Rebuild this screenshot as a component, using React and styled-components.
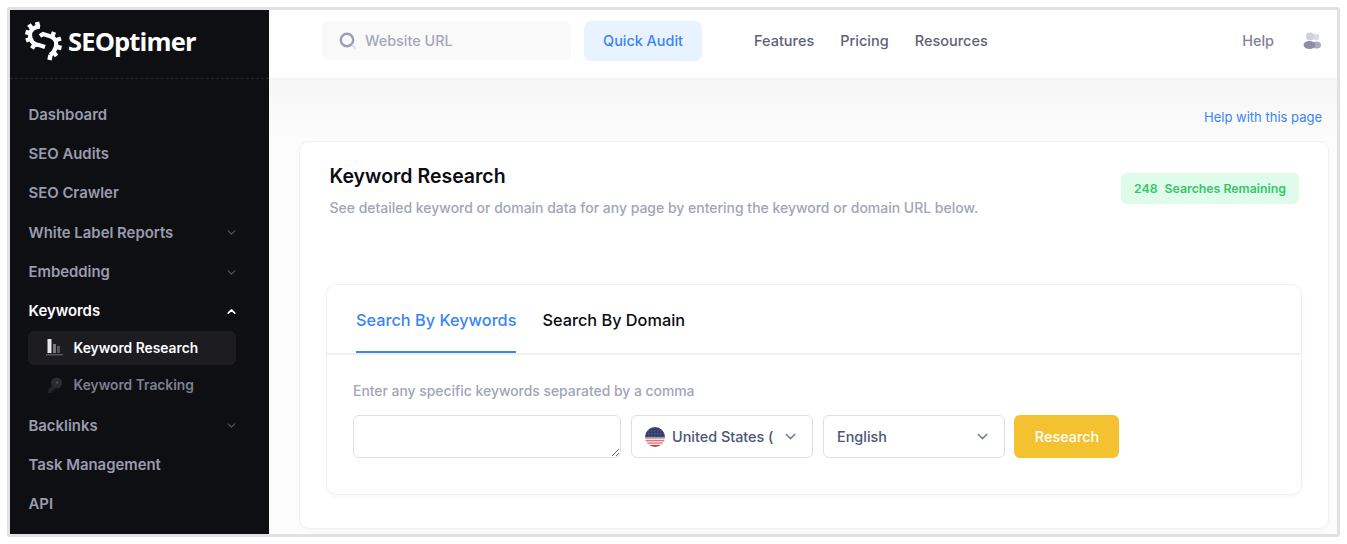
import React from 'react';
import styled, { createGlobalStyle } from 'styled-components';
import { ChevronDown, ChevronUp } from 'lucide-react';

const GlobalStyle = createGlobalStyle`
  html, body {
    margin: 0;
    background: #fff;
    font-family: Inter, "Liberation Sans", sans-serif;
  }
  * { box-sizing: border-box; }
`;

const Frame = styled.div`
  width: 1333px;
  height: 530px;
  margin: 7px 0 0 7px;
  border: 3px solid #e1e1e1;
  border-radius: 3px;
  display: flex;
  overflow: hidden;
`;

const Sidebar = styled.aside`
  width: 259px;
  flex: none;
  background: #0e0f13;
  display: flex;
  flex-direction: column;
`;

const LogoRow = styled.div`
  height: 69px;
  flex: none;
  padding: 0 0 7px 15px;
  display: flex;
  align-items: center;
  gap: 5px;
  border-bottom: 1px dashed #26272c;
`;

const LogoText = styled.span`
  color: #fff;
  font-family: "Open Sans", sans-serif;
  font-size: 25.5px;
  font-weight: 700;
  letter-spacing: -0.85px;
`;

const Nav = styled.nav`
  padding: 16.2px 33px 0 18.500px;
  display: flex;
  flex-direction: column;
`;

const NavItem = styled.div`
  height: 39.3px;
  flex: none;
  display: flex;
  align-items: center;
  justify-content: space-between;
  font-size: 14.9px;
  font-weight: 600;
  color: ${(p) => (p.$open ? '#fff' : '#9a9cae')};
  svg {
    color: ${(p) => (p.$open ? '#fff' : '#55565f')};
    margin-right: -2px;
  }
`;

const SubItem = styled.div`
  height: ${(p) => (p.$active ? '34px' : '41px')};
  flex: none;
  display: flex;
  align-items: center;
  gap: 11px;
  padding-left: 17.500px;
  margin-left: -0.5px;
  border-radius: 6px;
  font-size: 13.8px;
  font-weight: 600;
  color: ${(p) => (p.$active ? '#fff' : '#7d7f90')};
  background: ${(p) => (p.$active ? '#1c1c21' : 'transparent')};
`;

const Main = styled.div`
  flex: 1;
  min-width: 0;
  display: flex;
  flex-direction: column;
`;

const Header = styled.header`
  height: 68px;
  flex: none;
  background: #fff;
  padding: 11px 0 0 53px;
  display: flex;
  align-items: flex-start;
`;

const SearchBox = styled.div`
  width: 249px;
  height: 39px;
  background: #f9f9f9;
  border-radius: 7px;
  padding-left: 17px;
  display: flex;
  align-items: center;
  gap: 8px;
  font-size: 14.4px;
  font-weight: 500;
  color: #a5a8ba;
`;

const QuickAudit = styled.button`
  width: 118px;
  height: 40px;
  margin-left: 13px;
  padding: 0 0 2px;
  border: 0;
  border-radius: 7px;
  background: #e9f3ff;
  color: #3a85f5;
  font: 500 14.4px Inter, sans-serif;
`;

const TopLinks = styled.div`
  height: 39px;
  margin-left: 52px;
  display: flex;
  align-items: center;
  gap: 26px;
  font-size: 14.5px;
  font-weight: 500;
  color: #5e6278;
`;

const HeaderRight = styled.div`
  height: 39px;
  margin-left: auto;
  padding-right: 16px;
  display: flex;
  align-items: center;
  gap: 29px;
  font-size: 14.4px;
  font-weight: 500;
  color: #7e8299;
`;

const Content = styled.main`
  flex: 1;
  min-height: 0;
  background: linear-gradient(#f5f5f5, #fcfcfc 60px);
  padding: 31px 8px 0 30px;
`;

const HelpRow = styled.div`
  padding-right: 7px;
  text-align: right;
  font-size: 13px;
  line-height: 16px;
  color: #3a85f5;
`;

const Card = styled.section`
  height: 388px;
  margin-top: 16px;
  background: #fff;
  border: 1px solid #f1f1f4;
  border-radius: 10px;
  box-shadow: 0 2px 6px rgba(0, 0, 0, 0.02);
  padding: 21px 26px 0 26px;
`;

const CardHead = styled.div`
  display: flex;
  justify-content: space-between;
  align-items: flex-start;
  padding-left: 3.500px;
  height: 121px;
`;

const Title = styled.h1`
  margin: 0;
  font-size: 19.5px;
  line-height: 26px;
  font-weight: 600;
  color: #0b0b12;
`;

const Subtitle = styled.p`
  margin: 11px 0 0;
  font-size: 13.97px;
  line-height: 16px;
  font-weight: 500;
  color: #a1a5b7;
`;

const Badge = styled.div`
  width: 178px;
  height: 31px;
  margin: 10px 3px 0 0;
  border-radius: 6px;
  background: #dffbe9;
  color: #35c569;
  font-size: 12.3px;
  font-weight: 600;
  display: flex;
  align-items: center;
  justify-content: center;
  gap: 7px;
`;

const InnerCard = styled.div`
  height: 211px;
  background: #fff;
  border: 1px solid #f1f1f4;
  border-radius: 10px;
  box-shadow: 0 2px 6px rgba(0, 0, 0, 0.03);
`;

const Tabs = styled.div`
  height: 70px;
  padding: 0 0 0 29px;
  display: flex;
  gap: 26px;
  border-bottom: 2px solid #f1f1f4;
`;

const Tab = styled.div`
  height: 68px;
  line-height: 70px;
  font-size: 16.3px;
  font-weight: 500;
  color: ${(p) => (p.$active ? '#3a85f5' : '#0b0b12')};
  border-bottom: 2px solid ${(p) => (p.$active ? '#3a85f5' : 'transparent')};
`;

const FormBody = styled.div`
  padding: 28px 0 0 26px;
`;

const Label = styled.div`
  font-size: 13.9px;
  line-height: 16px;
  font-weight: 500;
  color: #a1a5b7;
`;

const Controls = styled.div`
  margin-top: 16px;
  display: flex;
  align-items: flex-start;
  gap: 10px;
`;

const KeywordInput = styled.textarea`
  width: 268px;
  height: 43px;
  margin: 0;
  border: 1px solid #dbdfe9;
  border-radius: 6px;
  background: #fff;
  outline: none;
  display: block;
`;

const Select = styled.div`
  width: 182px;
  height: 43px;
  border: 1px solid #dbdfe9;
  border-radius: 6px;
  padding: 0 13px 0 13px;
  display: flex;
  align-items: center;
  font-size: 14.4px;
  font-weight: 500;
  color: #4b5675;
  svg.chev { color: #78829d; margin-left: auto; flex: none; }
`;

const ResearchButton = styled.button`
  width: 105px;
  height: 43px;
  margin-left: -1px;
  padding: 0 0 0 1px;
  border: 0;
  border-radius: 6px;
  background: #f4c231;
  color: #fff;
  font: 500 14.4px Inter, sans-serif;
`;

const Logo = () => (
  <svg width="38" height="40" viewBox="0 0 38 40" fill="none" stroke="#fff" strokeWidth="4.200">
    <path d="M15 6 C9 5 5 9.500 5 14 C5 20 9 24 14 24 L20 26" />
    <path d="M15 15 L18 13 L26 15.500 C30.500 17.500 32.500 22 30.500 27 C29.500 30 28 32 25 34" />
    <g strokeWidth="4.400">
      <path d="M12 1 L13 5" />
      <path d="M4 3.500 L6.500 7" />
      <path d="M0.500 11 L4.500 12" />
      <path d="M1 19.500 L5 18" />
      <path d="M7 27.500 L9.500 23.500" />
      <path d="M29 11 L27.500 15" />
      <path d="M36 17.500 L31.500 19" />
      <path d="M36.500 27 L32 26" />
      <path d="M31.500 35 L28.500 31" />
      <path d="M24.500 39 L25.500 34" />
    </g>
  </svg>
);

const BarsIcon = () => (
  <svg width="17" height="17" viewBox="0 0 17 17">
    <rect x="1.500" y="0" width="4" height="14" fill="#e8e8ea" />
    <rect x="7" y="5" width="3" height="9" fill="#77787f" />
    <rect x="11" y="7" width="3" height="7" fill="#55565d" />
    <rect x="0" y="15" width="17" height="1.500" fill="#55565d" />
  </svg>
);

const KeyIcon = () => (
  <svg width="17" height="17" viewBox="0 0 17 17">
    <circle cx="10.500" cy="6" r="5.500" fill="#2b2c32" />
    <circle cx="11" cy="5.500" r="1.300" fill="#4a4b52" />
    <path d="M7 8 L2 13 V16 H5 L10 11 Z" fill="#232429" />
  </svg>
);

const SearchIcon = () => (
  <svg width="18" height="18" viewBox="0 0 18 18" fill="none">
    <circle cx="8" cy="8" r="6.200" stroke="#9a9eb3" strokeWidth="2.400" />
    <path d="M13 13 L16.500 16.500" stroke="#dfe1e8" strokeWidth="2" />
  </svg>
);

const UsersIcon = () => (
  <svg width="18" height="18" viewBox="0 0 18 18">
    <circle cx="13" cy="5" r="3.300" fill="#dcdde5" />
    <ellipse cx="13.500" cy="13" rx="4.500" ry="3.500" fill="#a9abbd" />
    <circle cx="7" cy="4.500" r="4" fill="#cfd0da" />
    <ellipse cx="6.500" cy="13" rx="6" ry="4" fill="#8b8ea5" />
  </svg>
);

const Flag = () => (
  <svg width="20" height="20" viewBox="0 0 20 20" style={{ marginRight: 7, flex: 'none' }}>
    <defs>
      <clipPath id="flag-clip"><circle cx="10" cy="10" r="10" /></clipPath>
      <pattern id="flag-stars" width="1.500" height="1.500" patternUnits="userSpaceOnUse">
        <rect width="1.500" height="1.500" fill="#2d3a6b" />
        <rect width="0.500" height="0.500" fill="#8d95b5" />
      </pattern>
    </defs>
    <g clipPath="url(#flag-clip)">
      <rect width="20" height="20" fill="#f1e4e5" />
      <rect y="0" width="20" height="10.500" fill="url(#flag-stars)" />
      <rect y="10.500" width="20" height="1.200" fill="#d98a8f" />
      <rect y="13" width="20" height="1.200" fill="#d9767c" />
      <rect y="15.500" width="20" height="1.200" fill="#d9767c" />
      <rect y="18" width="20" height="2" fill="#c9404a" />
    </g>
  </svg>
);

const items = [
  { label: 'Dashboard' },
  { label: 'SEO Audits' },
  { label: 'SEO Crawler' },
  { label: 'White Label Reports', more: true },
  { label: 'Embedding', more: true },
];

const itemsAfter = [
  { label: 'Backlinks', more: true },
  { label: 'Task Management' },
  { label: 'API' },
];

const renderItem = (item) => (
  <NavItem key={item.label}>
    {item.label}
    {item.more && <ChevronDown size={13} />}
  </NavItem>
);

export default function App() {
  return (
    <>
      <GlobalStyle />
      <Frame>
        <Sidebar>
          <LogoRow>
            <Logo />
            <LogoText>SEOptimer</LogoText>
          </LogoRow>
          <Nav>
            {items.map(renderItem)}
            <NavItem $open>
              Keywords
              <ChevronUp size={13} strokeWidth={3} />
            </NavItem>
            <SubItem $active>
              <BarsIcon />
              Keyword Research
            </SubItem>
            <SubItem>
              <KeyIcon />
              Keyword Tracking
            </SubItem>
            {itemsAfter.map(renderItem)}
          </Nav>
        </Sidebar>
        <Main>
          <Header>
            <SearchBox>
              <SearchIcon />
              Website URL
            </SearchBox>
            <QuickAudit>Quick Audit</QuickAudit>
            <TopLinks>
              <span>Features</span>
              <span>Pricing</span>
              <span>Resources</span>
            </TopLinks>
            <HeaderRight>
              <span>Help</span>
              <UsersIcon />
            </HeaderRight>
          </Header>
          <Content>
            <HelpRow>Help with this page</HelpRow>
            <Card>
              <CardHead>
                <div>
                  <Title>Keyword Research</Title>
                  <Subtitle>See detailed keyword or domain data for any page by entering the keyword or domain URL below.</Subtitle>
                </div>
                <Badge>
                  <span>248</span>
                  <span>Searches Remaining</span>
                </Badge>
              </CardHead>
              <InnerCard>
                <Tabs>
                  <Tab $active>Search By Keywords</Tab>
                  <Tab>Search By Domain</Tab>
                </Tabs>
                <FormBody>
                  <Label>Enter any specific keywords separated by a comma</Label>
                  <Controls>
                    <KeywordInput />
                    <Select>
                      <Flag />
                      <span>United States (</span>
                      <ChevronDown className="chev" size={17} />
                    </Select>
                    <Select>
                      <span>English</span>
                      <ChevronDown className="chev" size={17} />
                    </Select>
                    <ResearchButton>Research</ResearchButton>
                  </Controls>
                </FormBody>
              </InnerCard>
            </Card>
          </Content>
        </Main>
      </Frame>
    </>
  );
}
